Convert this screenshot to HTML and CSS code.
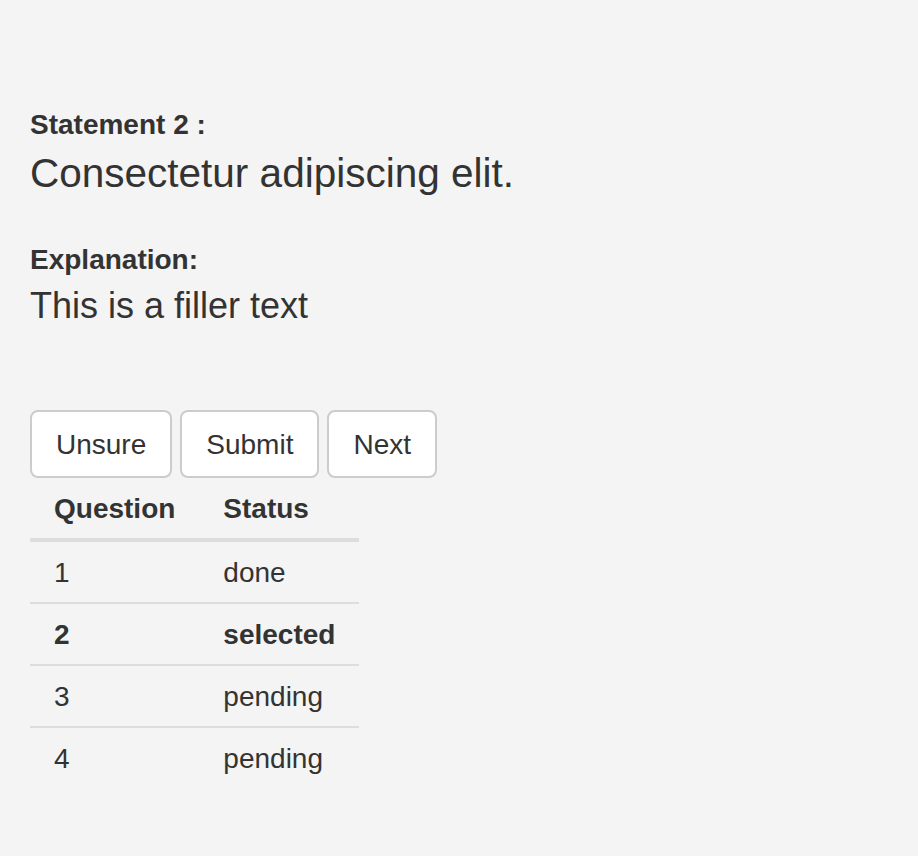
FILE: index.html
```html
<!DOCTYPE html>
<html>
<head>
<meta charset="utf-8">
<link rel="stylesheet" href="styles.css">
</head>
<body>
<main class="page">
  <section class="field">
    <div class="label">Statement 2 :</div>
    <div class="statement">Consectetur adipiscing elit.</div>
  </section>
  <section class="field explain">
    <div class="label">Explanation:</div>
    <div class="explanation">This is a filler text</div>
  </section>
  <div class="actions">
    <button class="btn">Unsure</button>
    <button class="btn">Submit</button>
    <button class="btn">Next</button>
  </div>
  <table class="status-table">
    <thead>
      <tr><th>Question</th><th>Status</th></tr>
    </thead>
    <tbody>
      <tr><td>1</td><td>done</td></tr>
      <tr class="selected"><td>2</td><td>selected</td></tr>
      <tr><td>3</td><td>pending</td></tr>
      <tr><td>4</td><td>pending</td></tr>
    </tbody>
  </table>
</main>
</body>
</html>
```
FILE: styles.css
```css
html, body {
  margin: 0;
  padding: 0;
  background: #f4f4f4;
}
body {
  font-family: "Liberation Sans", Arial, Helvetica, sans-serif;
  color: #333;
}
.page {
  padding: 105px 30px 0;
}
.label {
  font-size: 28px;
  font-weight: bold;
  line-height: 40px;
  margin-bottom: 6px;
}
.statement {
  font-size: 40.5px;
  line-height: 44px;
}
.explain {
  margin-top: 45px;
}
.explanation {
  font-size: 36px;
  line-height: 40px;
}
.actions {
  display: flex;
  gap: 8px;
  margin-top: 84px;
}
.btn {
  font-family: inherit;
  font-size: 28px;
  line-height: 40px;
  color: #333;
  background: #fff;
  border: 2px solid #ccc;
  border-radius: 8px;
  padding: 13px 24px 11px;
  margin: 0;
}
.status-table {
  border-collapse: separate;
  border-spacing: 0;
  font-size: 28px;
  line-height: 40px;
}
.status-table th,
.status-table td {
  padding: 11px 24px 9px;
  text-align: left;
  vertical-align: top;
}
.status-table th {
  font-weight: bold;
  border-bottom: 4px solid #ddd;
}
.status-table tbody tr + tr td {
  border-top: 2px solid #ddd;
}
.status-table tr.selected td {
  font-weight: bold;
}
```
